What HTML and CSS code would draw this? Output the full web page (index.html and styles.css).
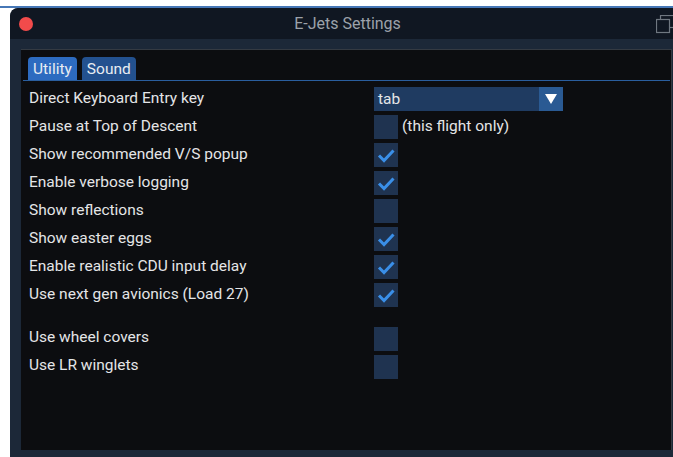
FILE: index.html
```html
<!DOCTYPE html>
<html lang="en">
<head>
<meta charset="utf-8">
<title>E-Jets Settings</title>
<link rel="stylesheet" href="styles.css">
</head>
<body>
<div class="topline"></div>
<div class="window">
  <div class="titlebar">
    <span class="close-dot"></span>
    <span class="title">E-Jets Settings</span>
    <svg class="popout" width="20" height="20" viewBox="0 0 20 20" aria-hidden="true">
      <rect x="4.5" y="0.5" width="14" height="12" fill="none" stroke="#6f7780" stroke-width="1.2"/>
      <rect x="0.5" y="4.5" width="13" height="13" fill="#101722" stroke="#6f7780" stroke-width="1.2"/>
    </svg>
  </div>
  <div class="content">
    <div class="tabs">
      <span class="tab active">Utility</span>
      <span class="tab">Sound</span>
    </div>
    <div class="settings">
      <div class="row">
        <span class="label">Direct Keyboard Entry key</span>
        <div class="select"><span class="select-value">tab</span><span class="select-arrow"></span></div>
      </div>
      <div class="row">
        <span class="label">Pause at Top of Descent</span>
        <div class="control"><span class="box"></span><span class="note">(this flight only)</span></div>
      </div>
      <div class="row">
        <span class="label">Show recommended V/S popup</span>
        <div class="control"><span class="box"><svg viewBox="0 0 24 24"><path d="M5 12.5 L10 17.5 L19.5 7.5"/></svg></span></div>
      </div>
      <div class="row">
        <span class="label">Enable verbose logging</span>
        <div class="control"><span class="box"><svg viewBox="0 0 24 24"><path d="M5 12.5 L10 17.5 L19.5 7.5"/></svg></span></div>
      </div>
      <div class="row">
        <span class="label">Show reflections</span>
        <div class="control"><span class="box"></span></div>
      </div>
      <div class="row">
        <span class="label">Show easter eggs</span>
        <div class="control"><span class="box"><svg viewBox="0 0 24 24"><path d="M5 12.5 L10 17.5 L19.5 7.5"/></svg></span></div>
      </div>
      <div class="row">
        <span class="label">Enable realistic CDU input delay</span>
        <div class="control"><span class="box"><svg viewBox="0 0 24 24"><path d="M5 12.5 L10 17.5 L19.5 7.5"/></svg></span></div>
      </div>
      <div class="row">
        <span class="label">Use next gen avionics (Load 27)</span>
        <div class="control"><span class="box"><svg viewBox="0 0 24 24"><path d="M5 12.5 L10 17.5 L19.5 7.5"/></svg></span></div>
      </div>
      <div class="row spaced">
        <span class="label">Use wheel covers</span>
        <div class="control"><span class="box"></span></div>
      </div>
      <div class="row">
        <span class="label">Use LR winglets</span>
        <div class="control"><span class="box"></span></div>
      </div>
    </div>
  </div>
</div>
</body>
</html>
```
FILE: styles.css
```css
html, body {
  margin: 0;
  padding: 0;
  background: #ffffff;
  overflow: hidden;
}

body {
  font-family: Roboto, "Liberation Sans", sans-serif;
  font-size: 15.5px;
  color: #e4e5e7;
}

.topline {
  height: 2px;
  margin-top: 6px;
  background: #4677b6;
}

.window {
  margin-left: 10px;
  height: 449px;
  background: #1c2838;
  border-top-left-radius: 8px;
  display: flex;
  flex-direction: column;
  padding: 0 1px 7px 11px;
  box-sizing: border-box;
  overflow: hidden;
}

.titlebar {
  position: relative;
  height: 31px;
  margin-left: -11px;
  margin-right: -1px;
  background: #101722;
  border-top-left-radius: 8px;
  display: flex;
  align-items: center;
  justify-content: center;
  flex-shrink: 0;
  margin-bottom: 10px;
}

.close-dot {
  position: absolute;
  left: 9px;
  top: 9px;
  width: 14px;
  height: 14px;
  border-radius: 50%;
  background: #f24b4b;
}

.title {
  font-size: 16px;
  color: #9ca2aa;
  margin-left: 12px;
}

.popout {
  position: absolute;
  left: 646px;
  top: 7px;
}

.content {
  flex: 1;
  background: #0c0d10;
  border-top: 1px solid #343a42;
  border-right: 1px solid #343a42;
  padding: 7px 1px 0 2px;
}

.tabs {
  display: flex;
  gap: 5px;
  padding-left: 5px;
  border-bottom: 1px solid #2a5e9e;
}

.tab {
  height: 23px;
  line-height: 24px;
  padding: 0 5px;
  border-radius: 4px 4px 0 0;
  background: #23518f;
  color: #e8ecf2;
  font-size: 15.5px;
}

.tab.active {
  background: #2d6bc0;
}

.settings {
  padding: 4px 0 0 6px;
  display: flex;
  flex-direction: column;
}

.row {
  display: grid;
  grid-template-columns: 345px auto;
  align-items: center;
  height: 28px;
}

.row.spaced {
  margin-top: 16px;
}

.label {
  white-space: nowrap;
  margin-top: -2px;
}

.row.spaced .label,
.row.spaced + .row .label {
  margin-top: -4px;
}

.control {
  display: flex;
  align-items: center;
  gap: 4px;
}

.box {
  width: 24px;
  height: 24px;
  background: #1f3350;
  display: flex;
}

.box svg {
  width: 24px;
  height: 24px;
}

.box path {
  fill: none;
  stroke: #3a8fe8;
  stroke-width: 3;
  stroke-linecap: butt;
  stroke-linejoin: miter;
}

.note {
  color: #e4e5e7;
  margin-top: -2px;
}

.select {
  width: 189px;
  height: 24px;
  display: flex;
  background: #1f3b61;
}

.select-value {
  flex: 1;
  padding-left: 4px;
  line-height: 24px;
}

.select-arrow {
  width: 24px;
  height: 24px;
  background: #2a5a93;
  display: flex;
  align-items: center;
  justify-content: center;
}

.select-arrow::after {
  content: "";
  width: 0;
  height: 0;
  border-left: 6px solid transparent;
  border-right: 6px solid transparent;
  border-top: 10px solid #ffffff;
}
```
